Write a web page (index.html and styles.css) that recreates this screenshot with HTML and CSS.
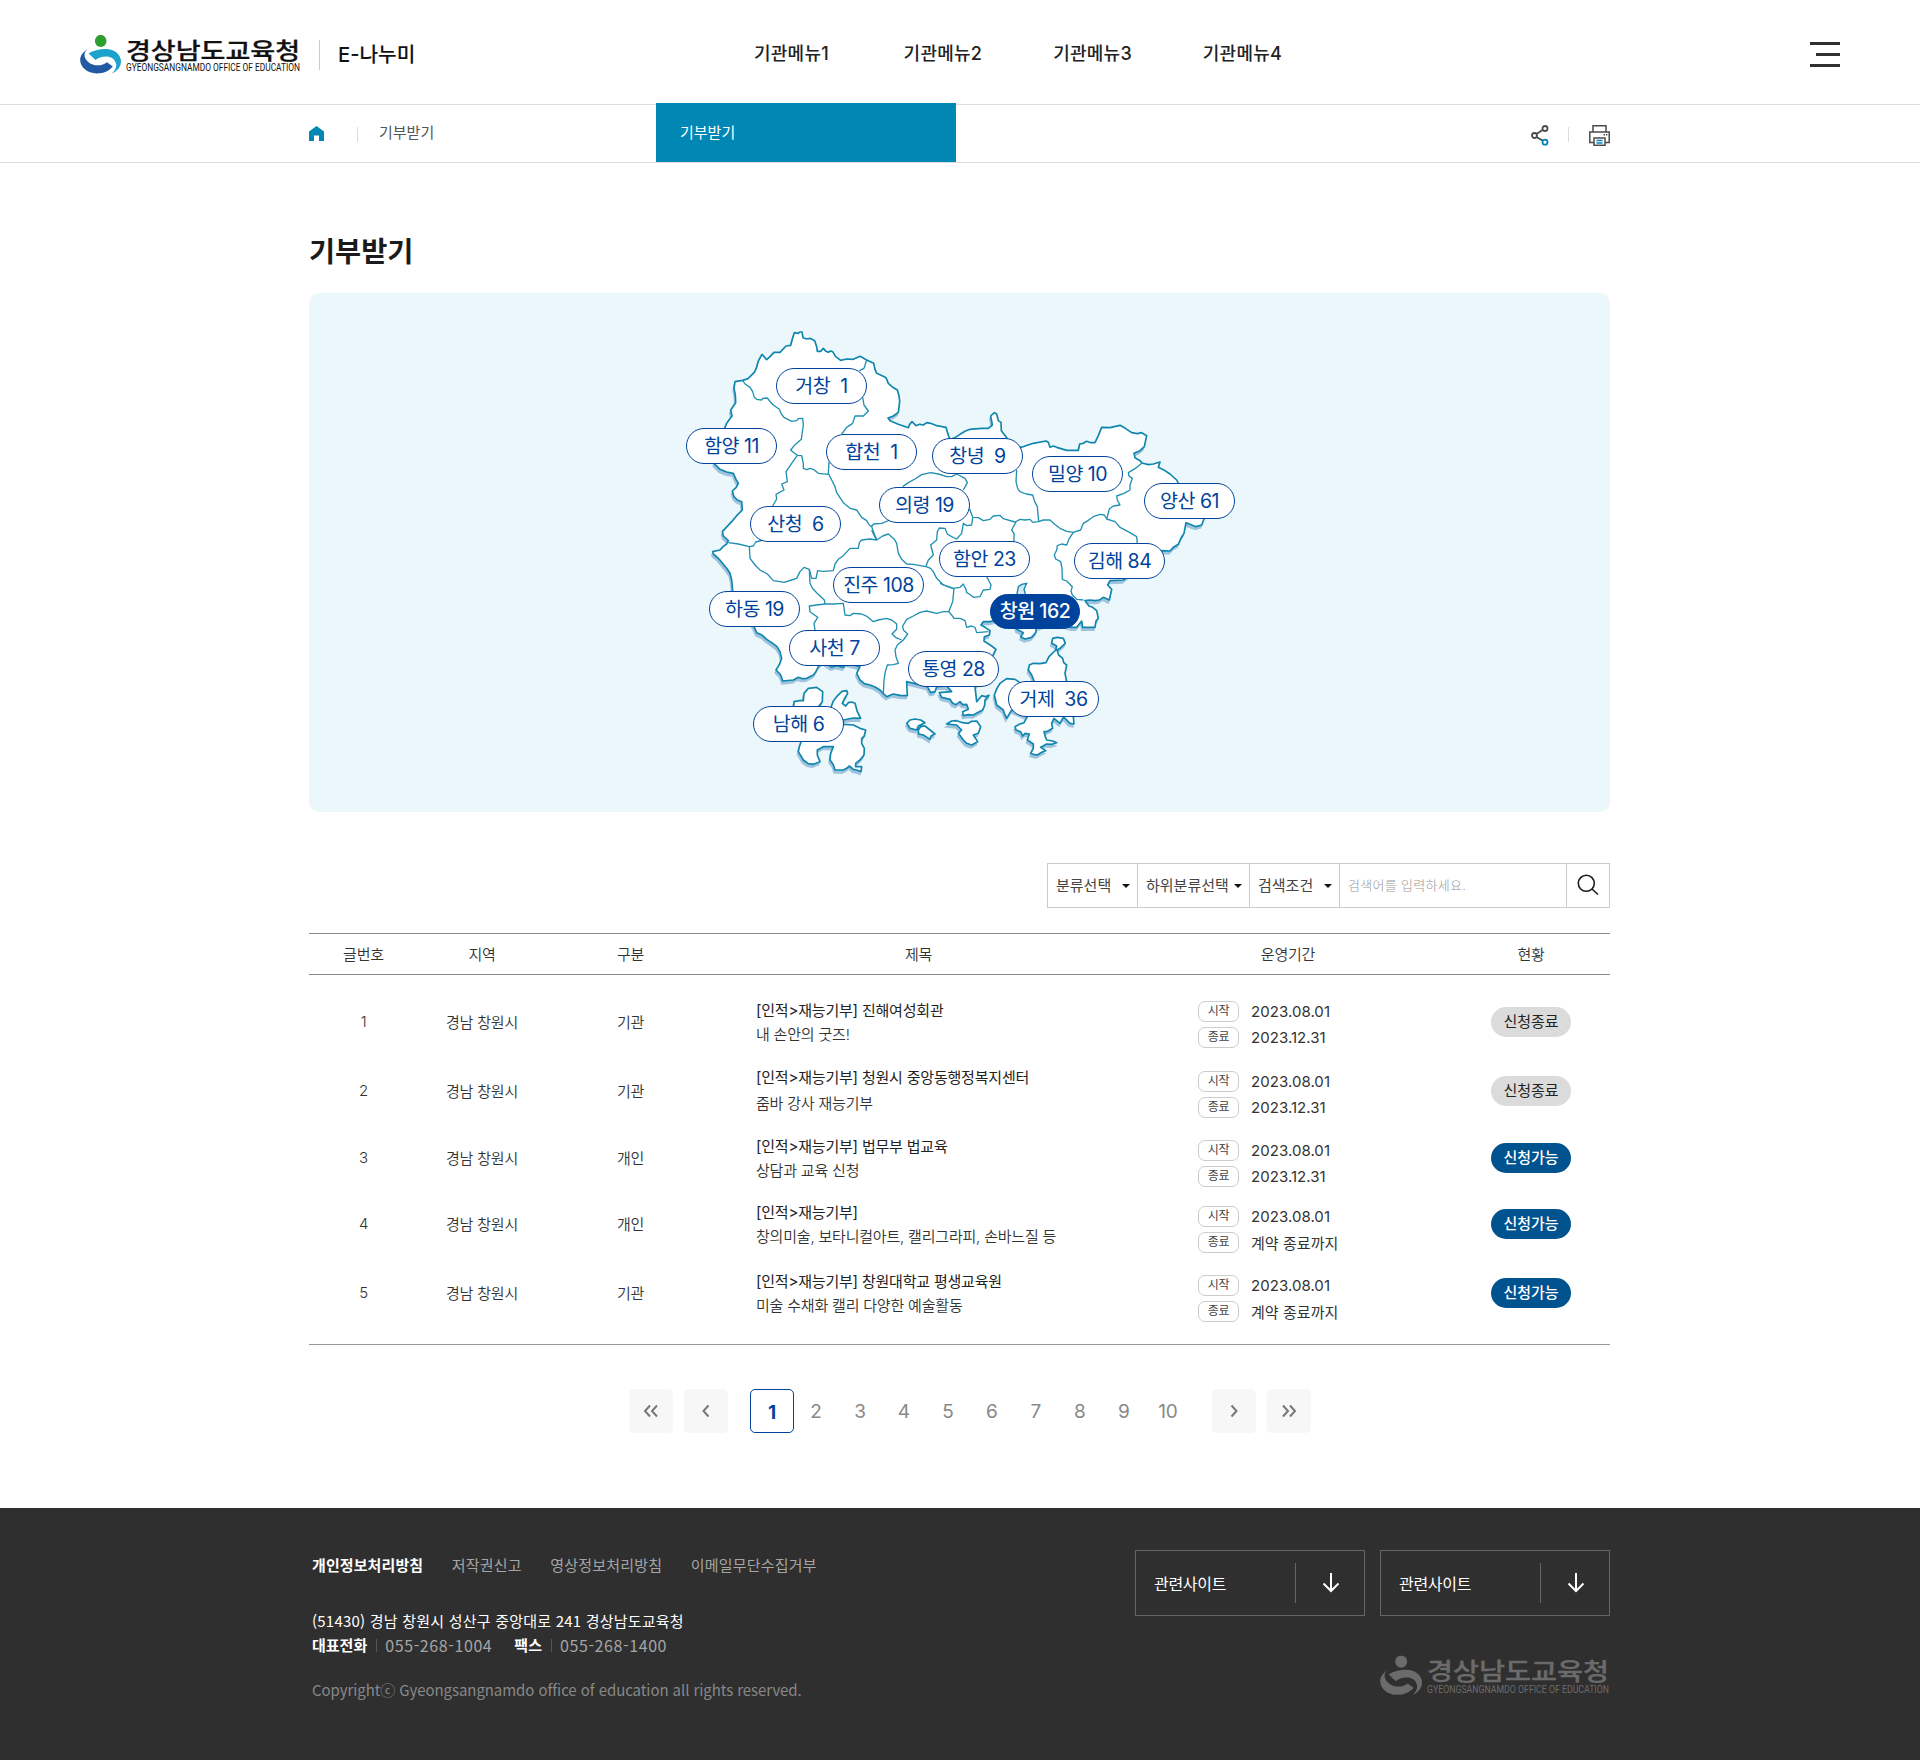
FILE: index.html
```html
<!DOCTYPE html>
<html lang="ko">
<head>
<meta charset="utf-8">
<title>기부받기 | E-나누미</title>
<link rel="stylesheet" href="styles.css">
</head>
<body>
<svg class="defs" width="0" height="0" aria-hidden="true">
  <symbol id="swirl" viewBox="0 0 42 39">
    <ellipse class="lg-head" cx="20.7" cy="5.9" rx="5.8" ry="6"/>
    <path class="lg-dark" d="M9.500 13.300C3 16.500 0 20.500.2 25.500.6 32 7 38.500 17 38.400 23.500 38.300 29 36 32.800 31.400L27 27.200C24 29.500 19 31.300 13.500 29.800 7.500 27.800 3.500 23 4.700 17.900 5.500 16 7 14.600 9.500 13.300Z"/>
    <path class="lg-light" d="M8.500 18.500C13 15.500 19 14 25.500 14 35 14 41 20 41 26.500 41 31.500 37.500 36 32 38.500 35 35.500 37 32 36 28.500 34.800 24 31 21.500 26 21.500 21.500 21.500 18 23 15.500 25Z"/>
  </symbol>
</svg>

<header class="header">
  <a class="logo">
    <svg class="logo-mark" viewBox="0 0 42 39"><use href="#swirl"/></svg>
    <svg class="logo-word" viewBox="0 0 174 38">
      <text class="lw-ko" x="0" y="23.500" textLength="174" lengthAdjust="spacingAndGlyphs">경상남도교육청</text>
      <text class="lw-en" x="0" y="36" textLength="174" lengthAdjust="spacingAndGlyphs">GYEONGSANGNAMDO OFFICE OF EDUCATION</text>
    </svg>
  </a>
  <span class="site-name">E-나누미</span>
  <nav class="gnb"><a>기관메뉴1</a><a>기관메뉴2</a><a>기관메뉴3</a><a>기관메뉴4</a></nav>
  <div class="burger"><i></i><i></i><i></i></div>
</header>

<div class="crumbs">
  <div class="crumbs-in">
    <svg class="home" width="15" height="15" viewBox="0 0 15 15"><path d="M7.500 0 15 5.500V15H10V9.500H5V15H0V5.500Z" fill="#0087b3"/></svg>
    <i class="bar"></i>
    <span class="crumb">기부받기</span>
    <span class="crumb on">기부받기</span>
    <svg class="share" width="18" height="21" viewBox="0 0 18 21" fill="none" stroke-width="1.800"><path d="M11.500 5 5.500 9M5.500 12 11.500 15.500" stroke="#4b4b4b"/><circle cx="3.500" cy="10.500" r="2.500" stroke="#4b4b4b"/><circle cx="14" cy="3.500" r="2.500" stroke="#4b4b4b"/><circle cx="14" cy="17.200" r="2.500" stroke="#0087b3"/></svg>
    <i class="bar"></i>
    <svg class="print" width="21" height="21" viewBox="0 0 21 21" fill="none" stroke="#4b4b4b" stroke-width="1.500"><path d="M4 7V.8H17V7M5 17.500H.8V7H20.200V17.500H16"/><rect x="5" y="13" width="11" height="7.300"/><path d="M7.500 15.500H13.500M7.500 18H13.500" stroke="#0087b3"/><path d="M14.500 9.700H16M17 9.700H18.300"/></svg>
  </div>
</div>

<main class="main">
  <h1>기부받기</h1>

  <section class="map">
    <svg class="map-art" width="580" height="480" viewBox="0 0 1740 1440">
      <defs>
        <g id="land">
          <path d="M248 211 264 206 283 187 290 172 295 153 306 133 314 142 320 149 330 140 342 127 360 127 378 108 392 106 398 84 403 68 415 70 419 66 426 66 429 83 440 87 450 85 464 92 470 110 472 124 482 124 490 115 498 124 505 127 512 123 518 125 527 140 542 151 560 147 580 148 600 139 620 150 641 160 645 178 650 190 668 198 678 203 685 220 697 231 712 240 717 257 719 275 715 307 700 318 684 324 690 332 715 343 745 353 749 343 756 335 768 347 779 343 790 345 800 338 812 340 830 347 858 352 862 366 866 378 870 388 885 383 900 373 915 364 930 358 965 355 985 355 997 345 992 318 1003 308 1010 312 1015 332 1023 337 1024 362 1040 383 1055 405 1085 412 1102 406 1120 400 1158 393 1165 397 1170 412 1180 408 1190 412 1220 421 1255 421 1259 402 1270 400 1280 394 1292 398 1305 398 1315 377 1325 352 1350 353 1380 346 1396 355 1415 368 1432 371 1445 368 1460 377 1453 410 1440 422 1422 430 1425 443 1440 452 1446 459 1465 464 1480 462 1500 456 1495 472 1510 479 1530 492 1550 510 1556 522 1610 570 1632 627 1625 645 1608 650 1590 643 1578 638 1572 670 1563 684 1555 703 1540 712 1530 723 1505 722 1450 760 1390 810 1350 812 1343 825 1355 838 1348 870 1330 862 1318 870 1305 872 1290 870 1275 872 1287 888 1298 892 1310 902 1315 925 1308 933 1305 952 1268 952 1265 933 1250 952 1235 952 1180 935 1128 955 1128 967 1115 982 1095 987 1082 980 1090 968 1070 958 1060 920 990 935 970 935 963 945 975 952 990 962 988 975 973 980 972 993 995 1008 1008 1018 1000 1033 980 1100 945 1130 950 1175 965 1157 975 1160 987 1156 975 1170 974 1186 968 1200 955 1207 940 1215 925 1214 910 1217 908 1205 925 1198 920 1183 908 1184 900 1175 888 1184 878 1180 870 1168 845 1162 838 1148 875 1145 860 1128 830 1130 825 1145 812 1148 802 1130 740 1115 742 1157 720 1156 700 1152 692 1155 680 1160 670 1151 660 1140 645 1131 630 1125 613 1121 600 1110 590 1090 600 1070 560 1060 550 1072 530 1067 515 1072 490 1055 475 1070 467 1086 460 1095 440 1105 427 1106 415 1102 400 1110 368 1113 364 1100 360 1092 348 1080 358 1064 365 1045 360 1025 351 1010 335 998 320 988 307 976 290 968 282 950 218 843 215 810 210 790 200 775 175 745 160 732 158 725 180 720 190 709 200 702 205 692 190 678 187 665 215 635 230 617 247 600 245 575 232 570 222 560 217 543 228 533 235 520 228 508 220 490 200 486 180 478 162 460 180 390 195 352 200 340 216 318 212 300 227 278 226 255 222 235 225 215Z"/>
          <g transform="translate(60 660)">
            <path d="M340 545 342 515 358 512 370 512 372 490 385 475 410 472 428 485 427 515 412 535 452 535 460 513 470 500 486 484 500 482 503 490 494 505 487 520 497 528 505 518 515 516 525 520 532 545 542 565 520 564 490 570 490 583 520 585 540 595 557 600 553 618 545 625 545 640 553 655 552 675 540 690 527 700 527 710 545 710 543 725 530 720 520 718 508 708 500 715 490 720 465 720 460 704 450 690 452 670 460 650 430 650 412 660 412 675 420 695 400 703 385 701 370 690 355 665 358 650 365 630Z"/>
            <path d="M680 580 690 570 705 567 722 570 735 578 715 588 710 600 690 595ZM715 600 722 590 735 588 750 600 765 612 753 618 750 628 730 615 716 612ZM800 582 815 573 830 572 848 578 865 580 875 574 890 573 902 590 895 610 880 615 893 635 875 645 860 640 850 630 835 610 845 600 830 585Z"/>
          </g>
          <g transform="translate(720 690)">
            <path d="M405 430 395 405 385 390 388 375 400 370 420 371 438 368 447 350 455 342 467 330 470 318 455 310 458 295 472 292 490 295 496 310 480 325 471 330 476 345 488 355 491 368 500 375 495 400 500 425 520 530 522 552 510 550 495 535 490 532 480 550 462 535 455 550 458 565 440 575 432 575 436 590 440 600 458 603 470 608 455 613 440 612 422 622 437 632 425 637 412 645 400 643 392 640 400 625 400 612 382 600 388 582 375 580 368 588 362 575 348 570 345 560 358 553 372 548 382 530 335 510 320 535 313 520 310 510 290 495 283 465 290 447 300 430 320 416 345 418 360 428Z"/>
          </g>
        </g>
      </defs>
      <use href="#land" class="land-shadow" transform="translate(-3 9)"/>
      <use href="#land" class="land"/>
      <path class="bay" d="M1070 856 1075 830 1085 823 1100 820 1092 838 1097 856Z"/>
      <g class="borders">
        <path d="M248 211 255 222 270 232 278 245 283 262 290 268 305 270 308 265 322 264 332 277 340 285 358 298 364 312 372 322 395 334 410 332 415 326 428 325 430 345 427 365 424 388 405 404 392 420 400 427 412 436 425 437 430 460 430 475 440 479 450 475 462 479 475 490 505 493"/>
        <path d="M412 436 395 460 378 485 382 515 365 522 372 540 348 553 350 567 338 588"/>
        <path d="M620 150 612 175 598 182M608 262 612 285 625 303 610 318 585 318 578 340 560 352 545 372M507 455 505 490 515 510 525 530 530 548 550 578 570 595 590 600 605 622 620 632 628 645 635 650 642 670 650 688M635 650 640 642 665 640 690 630"/>
        <path d="M728 530 745 518 765 507 785 494 812 488 835 492 860 500 875 500 890 492 915 505 922 518 910 540"/>
        <path d="M1070 480 1068 515 1073 535 1080 545 1098 552 1118 555 1124 575 1132 590 1136 635"/>
        <path d="M928 595 938 622 955 623 970 632 990 628 1000 618 1020 616 1030 626 1065 636 1080 628 1095 630 1110 628 1118 637 1136 635 1150 630 1170 630 1186 644 1200 655 1220 664 1240 667 1262 660 1270 640 1285 631 1300 620 1320 613 1333 615 1340 627 1365 635 1380 652 1410 668 1430 680 1432 700"/>
        <path d="M1446 459 1425 476 1405 488 1407 498 1417 505 1410 525 1410 540 1392 550 1370 558 1372 570 1380 585 1360 588 1348 597 1340 627"/>
        <path d="M1240 667 1228 685 1220 705 1205 702 1192 707 1190 720 1183 735 1187 747 1202 755 1206 775 1207 808 1220 813 1237 830 1233 843 1237 855 1250 868 1270 870"/>
        <path d="M1068 636 1055 660 1062 670 1062 695M980 800 993 825 990 838 970 840 960 860 940 862 928 852 920 848 918 838 910 822 900 832 880 835 860 828 840 820"/>
        <path d="M938 622 935 645 920 647 910 640 905 670 890 687 875 680 862 672 855 655 838 654 832 665 830 690 812 705 820 735 805 750 798 768"/>
        <path d="M205 698 235 702 268 710 270 745 285 765 300 780 322 792 340 812 373 817 395 810 410 805 420 785 432 772 448 778 450 820 457 835 470 848 493 870 495 882M268 710 280 708 287 696 310 690"/>
        <path d="M448 778 455 805 468 805 473 782 490 784 520 782 525 762 535 748 550 737 570 715 595 715 598 698 605 690 630 687 650 690 668 678 685 672 703 688 710 700 715 730 725 748 740 762 760 763 798 770 812 775 820 785 830 805 850 825 882 837 880 855 878 875 866 905 850 905 830 910 800 903 780 907 760 918 740 928 728 948 730 960 743 972 730 990 712 1005 705 1020 708 1040 715 1060 700 1064 682 1065 676 1085 672 1110 670 1150"/>
        <path d="M650 690 643 678 635 660M495 882 520 882 550 880 555 915 570 917 580 910 605 912 622 920 640 935 655 930 680 925 695 930 710 942 710 958 696 972 708 983 725 990M495 882 470 885 448 888 450 905 473 922 462 940 465 960"/>
        <path d="M866 905 875 915 882 925 900 925 915 932 920 952 935 948 945 952 950 968 985 965"/>
      </g>
    </svg>
    <button class="pin" style="left:467px;top:75px">거창&nbsp; 1</button>
    <button class="pin" style="left:377px;top:135px">함양 11</button>
    <button class="pin" style="left:517px;top:141px">합천&nbsp; 1</button>
    <button class="pin" style="left:623px;top:145px">창녕&nbsp; 9</button>
    <button class="pin" style="left:723px;top:163px">밀양 10</button>
    <button class="pin" style="left:835px;top:190px">양산 61</button>
    <button class="pin" style="left:570px;top:194px">의령 19</button>
    <button class="pin" style="left:441px;top:213px">산청&nbsp; 6</button>
    <button class="pin" style="left:630px;top:248px">함안 23</button>
    <button class="pin" style="left:765px;top:250px">김해 84</button>
    <button class="pin" style="left:524px;top:274px">진주 108</button>
    <button class="pin" style="left:400px;top:298px">하동 19</button>
    <button class="pin on" style="left:681px;top:301px">창원 162</button>
    <button class="pin" style="left:480px;top:337px">사천 7</button>
    <button class="pin" style="left:599px;top:358px">통영 28</button>
    <button class="pin" style="left:699px;top:388px">거제&nbsp; 36</button>
    <button class="pin" style="left:444px;top:413px">남해 6</button>
  </section>

  <form class="search">
    <span class="sel s1">분류선택<i></i></span>
    <span class="sel s2">하위분류선택<i></i></span>
    <span class="sel s3">검색조건<i></i></span>
    <span class="field">검색어를 입력하세요.</span>
    <span class="go"><svg width="22" height="22" viewBox="0 0 22 22" fill="none" stroke="#1b1b1b" stroke-width="1.600"><circle cx="9.300" cy="9.300" r="8"/><path d="M15 15 21 20.500"/></svg></span>
  </form>

  <div class="table">
    <div class="row head"><span>글번호</span><span>지역</span><span>구분</span><span>제목</span><span>운영기간</span><span>현황</span></div>
    <div class="row r1"><span>1</span><span>경남 창원시</span><span>기관</span>
      <div class="subj"><b>[인적&gt;재능기부] 진해여성회관</b><p>내 손안의 굿즈!</p></div>
      <div class="term"><p><em>시작</em>2023.08.01</p><p><em>종료</em>2023.12.31</p></div><div class="state"><i>신청종료</i></div></div>
    <div class="row r2"><span>2</span><span>경남 창원시</span><span>기관</span>
      <div class="subj"><b>[인적&gt;재능기부] 청원시 중앙동행정복지센터</b><p>줌바 강사 재능기부</p></div>
      <div class="term"><p><em>시작</em>2023.08.01</p><p><em>종료</em>2023.12.31</p></div><div class="state"><i>신청종료</i></div></div>
    <div class="row r3"><span>3</span><span>경남 창원시</span><span>개인</span>
      <div class="subj"><b>[인적&gt;재능기부] 법무부 법교육</b><p>상담과 교육 신청</p></div>
      <div class="term"><p><em>시작</em>2023.08.01</p><p><em>종료</em>2023.12.31</p></div><div class="state"><i class="open">신청가능</i></div></div>
    <div class="row r4"><span>4</span><span>경남 창원시</span><span>개인</span>
      <div class="subj"><b>[인적&gt;재능기부]</b><p>창의미술, 보타니컬아트, 캘리그라피, 손바느질 등</p></div>
      <div class="term"><p><em>시작</em>2023.08.01</p><p><em>종료</em>계약 종료까지</p></div><div class="state"><i class="open">신청가능</i></div></div>
    <div class="row r5"><span>5</span><span>경남 창원시</span><span>기관</span>
      <div class="subj"><b>[인적&gt;재능기부] 창원대학교 평생교육원</b><p>미술 수채화 캘리 다양한 예술활동</p></div>
      <div class="term"><p><em>시작</em>2023.08.01</p><p><em>종료</em>계약 종료까지</p></div><div class="state"><i class="open">신청가능</i></div></div>
  </div>

  <nav class="pager">
    <a class="arr"><svg width="16" height="14" viewBox="0 0 16 14"><path d="M7 1.500 2 7 7 12.500M14 1.500 9 7 14 12.500"/></svg></a>
    <a class="arr prev"><svg width="16" height="14" viewBox="0 0 16 14"><path d="M10.500 1.500 5.500 7 10.500 12.500"/></svg></a>
    <a class="cur">1</a><a>2</a><a>3</a><a>4</a><a>5</a><a>6</a><a>7</a><a>8</a><a>9</a><a>10</a>
    <a class="arr next"><svg width="16" height="14" viewBox="0 0 16 14"><path d="M5.500 1.500 10.500 7 5.500 12.500"/></svg></a>
    <a class="arr last"><svg width="16" height="14" viewBox="0 0 16 14"><path d="M2 1.500 7 7 2 12.500M9 1.500 14 7 9 12.500"/></svg></a>
  </nav>
</main>

<footer class="footer">
  <div class="f-left">
    <nav class="f-links"><b>개인정보처리방침</b><a>저작권신고</a><a>영상정보처리방침</a><a>이메일무단수집거부</a></nav>
    <p class="addr">(51430) 경남 창원시 성산구 중앙대로 241 경상남도교육청</p>
    <p class="tel"><b>대표전화</b><i></i><span>055-268-1004</span><b class="fax">팩스</b><i></i><span>055-268-1400</span></p>
    <p class="copy">Copyrightⓒ Gyeongsangnamdo office of education all rights reserved.</p>
  </div>
  <div class="f-right">
    <div class="sites">
      <a><span>관련사이트</span><i></i><svg width="18" height="20" viewBox="0 0 18 20"><path d="M9 0V18M1.500 10.500 9 18 16.500 10.500"/></svg></a>
      <a><span>관련사이트</span><i></i><svg width="18" height="20" viewBox="0 0 18 20"><path d="M9 0V18M1.500 10.500 9 18 16.500 10.500"/></svg></a>
    </div>
    <div class="logo grey">
      <svg class="logo-mark" viewBox="0 0 42 39"><use href="#swirl"/></svg>
      <svg class="logo-word" viewBox="0 0 174 38">
        <text class="lw-ko" x="0" y="23.500" textLength="174" lengthAdjust="spacingAndGlyphs">경상남도교육청</text>
        <text class="lw-en" x="0" y="36" textLength="174" lengthAdjust="spacingAndGlyphs">GYEONGSANGNAMDO OFFICE OF EDUCATION</text>
      </svg>
    </div>
  </div>
</footer>
</body>
</html>
```
FILE: styles.css
```css
* { box-sizing: border-box; margin: 0; padding: 0; }
body { width: 1920px; height: 1760px; overflow: hidden; background: #fff; color: #333; font-family: Inter, "Noto Sans CJK KR", sans-serif; font-size: 15px; }
i, em { font-style: normal; }
.defs { display: block; position: absolute; }

/* header */
.header { height: 105px; border-bottom: 1px solid #ddd; display: flex; align-items: flex-start; padding-left: 80px; }
.logo { --head: #2e9e33; --dark: #2159a3; --light: #1ca3cb; --word: #111; display: flex; margin-top: 35px; width: 219px; flex: none; }
.logo-mark { width: 42px; height: 39px; flex: none; }
.logo-word { width: 174px; height: 38px; margin-left: 4px; flex: none; overflow: visible; }
.lw-ko { font: 500 22.500px "Noto Sans CJK KR", sans-serif; fill: var(--word); stroke: var(--word); stroke-width: .3; }
.lw-en { font: 400 10.300px Roboto, sans-serif; fill: var(--word); }
.lg-head { fill: var(--head); }
.lg-dark { fill: var(--dark); }
.lg-light { fill: var(--light); }
.site-name { margin: 40px 0 0 20px; border-left: 1px solid #ccc; padding-left: 18px; height: 30px; width: 434px; font-size: 20.200px; font-weight: 500; line-height: 30px; color: #111; white-space: nowrap; flex: none; }
.gnb { display: flex; margin-top: 39px; width: 1057px; flex: none; }
.gnb a { width: 149.600px; padding-left: 1px; font-size: 18px; font-weight: 450; line-height: 30px; letter-spacing: .25px; color: #222; }
.burger { width: 30px; margin-top: 42px; display: flex; flex-direction: column; align-items: flex-end; gap: 8px; flex: none; }
.burger i { width: 30px; height: 3px; background: #2f2f2f; }
.burger i:nth-child(2) { width: 24px; }

/* breadcrumbs */
.crumbs { height: 58px; border-bottom: 1px solid #ddd; }
.crumbs-in { width: 1301px; margin-left: 309px; display: flex; }
.home { margin-top: 21px; flex: none; }
.bar { width: 1px; height: 15px; background: #ddd; margin: 22px 0 0 33px; flex: none; }
.crumb { width: 277px; margin-left: 21px; line-height: 55px; color: #555; }
.crumb.on { width: 300px; height: 59px; margin: -2px 0 0; padding-left: 24px; background: #0087b3; color: #fff; line-height: 59px; }
.share { margin: 20px 0 0 575px; flex: none; }
.share + .bar { margin-left: 19px; }
.print { margin: 20px 0 0 20px; flex: none; }

/* main */
.main { width: 1301px; margin-left: 309px; height: 1345px; }
h1 { font-size: 28.400px; font-weight: 600; color: #1b1b1b; line-height: 40px; padding-top: 69px; height: 130px; }
.map { position: relative; height: 519px; background: #ebf7fb; border-radius: 10px; }
.map-art { display: block; margin-left: 351px; transform: translateY(17px); overflow: visible; }
.land { fill: #fff; stroke: #0f86ae; stroke-width: 5; stroke-linejoin: round; }
.land-shadow { fill: #9fc3dc; stroke: #9fc3dc; stroke-width: 4; }
.bay { fill: #d3e8f2; stroke: #0f86ae; stroke-width: 4; }
.borders { fill: none; stroke: #2090b1; stroke-width: 4; stroke-linejoin: round; }
.pin { position: absolute; width: 91px; height: 36px; margin-top: -.5px; border: 1px solid #00439c; border-radius: 18px; background: #fff; color: #00439c; font: 400 19.500px/34px Inter, "Noto Sans CJK KR", sans-serif; letter-spacing: -.5px; white-space: nowrap; text-align: center; }
.pin.on { background: #00439c; color: #fff; font-weight: 500; width: 90px; height: 35px; line-height: 33px; }

/* search */
.search { display: flex; width: 563px; height: 45px; margin: 51px 0 0 738px; border: 1px solid #ccc; line-height: 43px; color: #444; }
.sel { display: flex; align-items: center; justify-content: space-between; padding: 0 7px 0 8px; border-right: 1px solid #ccc; white-space: nowrap; flex: none; }
.sel i { border: 4px solid transparent; border-top-color: #111; border-bottom: 0; }
.s1 { width: 90px; }
.s2 { width: 112px; }
.s3 { width: 90px; }
.field { width: 227px; padding-left: 8px; font-size: 13px; font-weight: 300; color: #999; letter-spacing: .3px; border-right: 1px solid #ccc; flex: none; }
.go { flex: 1; display: flex; align-items: center; justify-content: center; padding-bottom: 1px; }

/* table */
.table { margin-top: 25px; border-top: 1px solid #888; border-bottom: 1px solid #999; height: 412px; letter-spacing: -.2px; font-weight: 350; }
.row { display: grid; grid-template-columns: 109px 128px 169px 407px 332px 154px; align-items: center; }
.row > span { text-align: center; padding-bottom: 1px; }
.row.head { height: 41px; border-bottom: 1px solid #888; margin-bottom: 13px; }
.r1 { height: 68px; } .r2 { height: 69px; } .r3, .r4 { height: 66px; } .r5 { height: 72px; }
.subj { padding: 1px 0 0 41px; line-height: 24px; white-space: nowrap; color: #333; }
.subj b { display: block; font-weight: 400; color: #222; }
.r2 .subj { line-height: 26px; }
.term { padding: 4px 0 0 76px; color: #333; letter-spacing: .05px; }
.r2 .term { padding-top: 7px; }
.r3 .term, .r4 .term, .r5 .term { padding-top: 10px; }
.term p { display: flex; align-items: center; height: 21px; margin-bottom: 5px; font-weight: 400; }
.term p + p { margin-bottom: 0; }
.term em { width: 41px; height: 21px; border: 1px solid #ccc; border-radius: 7px; margin-right: 12px; font-size: 12px; line-height: 18px; text-align: center; color: #444; letter-spacing: -.2px; }
.state { display: flex; justify-content: center; }
.state i { width: 80px; height: 30px; border-radius: 15px; background: #dbdbdb; color: #222; line-height: 29px; text-align: center; font-weight: 400; letter-spacing: 0; }
.state .open { background: #00538e; color: #fff; font-weight: 500; }

/* pagination */
.pager { display: flex; margin: 44px 0 0 320px; font-size: 19px; color: #888; }
.pager a { width: 44px; height: 44px; line-height: 45px; text-align: center; flex: none; }
.pager .arr { display: flex; align-items: center; justify-content: center; background: #f7f7f7; border-radius: 5px; }
.pager svg { fill: none; stroke: #777; stroke-width: 2; }
.pager .prev { margin: 0 22px 0 11px; }
.pager .next { margin: 0 11px 0 22px; }
.pager .cur { border: 1px solid #00439c; border-radius: 5px; color: #00439c; font-weight: 700; }

/* footer */
.footer { height: 252px; background: #2f2f2f; padding: 42px 310px 0 312px; display: flex; justify-content: space-between; font-family: "Noto Sans CJK KR", sans-serif; color: #a5a5a5; }
.f-links { display: flex; gap: 28.500px; line-height: 30px; letter-spacing: .2px; }
.f-links b { color: #fff; font-weight: 700; letter-spacing: .1px; }
.addr { margin-top: 29px; line-height: 24px; color: #fff; letter-spacing: .22px; }
.addr, .tel { white-space: nowrap; height: 24px; }
.tel { display: flex; align-items: center; line-height: 24px; }
.tel span { font-size: 16px; letter-spacing: .6px; }
.tel b { color: #fff; }
.tel i { width: 1px; height: 13px; background: #555; margin: 0 8px 0 9px; }
.tel .fax { margin-left: 22px; }
.copy { margin-top: 20px; line-height: 26px; color: #888; white-space: nowrap; letter-spacing: -.07px; }
.sites { display: flex; gap: 15px; }
.sites a { width: 230px; height: 66px; border: 1px solid #666; display: flex; align-items: center; color: #fff; font-size: 16px; letter-spacing: -.3px; }
.sites span { width: 159px; padding-left: 18px; line-height: 61px; }
.sites i { width: 1px; height: 40px; background: #666; }
.sites svg { margin-left: 26px; fill: none; stroke: #fff; stroke-width: 2; }
.grey { --head: #6b6b6b; --dark: #6b6b6b; --light: #6b6b6b; --word: #6b6b6b; margin: 39px 0 0 245px; width: 230px; }
.grey .logo-mark { width: 43px; height: 41px; }
.grey .logo-word { width: 182px; height: 40px; margin-left: 4px; }
```
